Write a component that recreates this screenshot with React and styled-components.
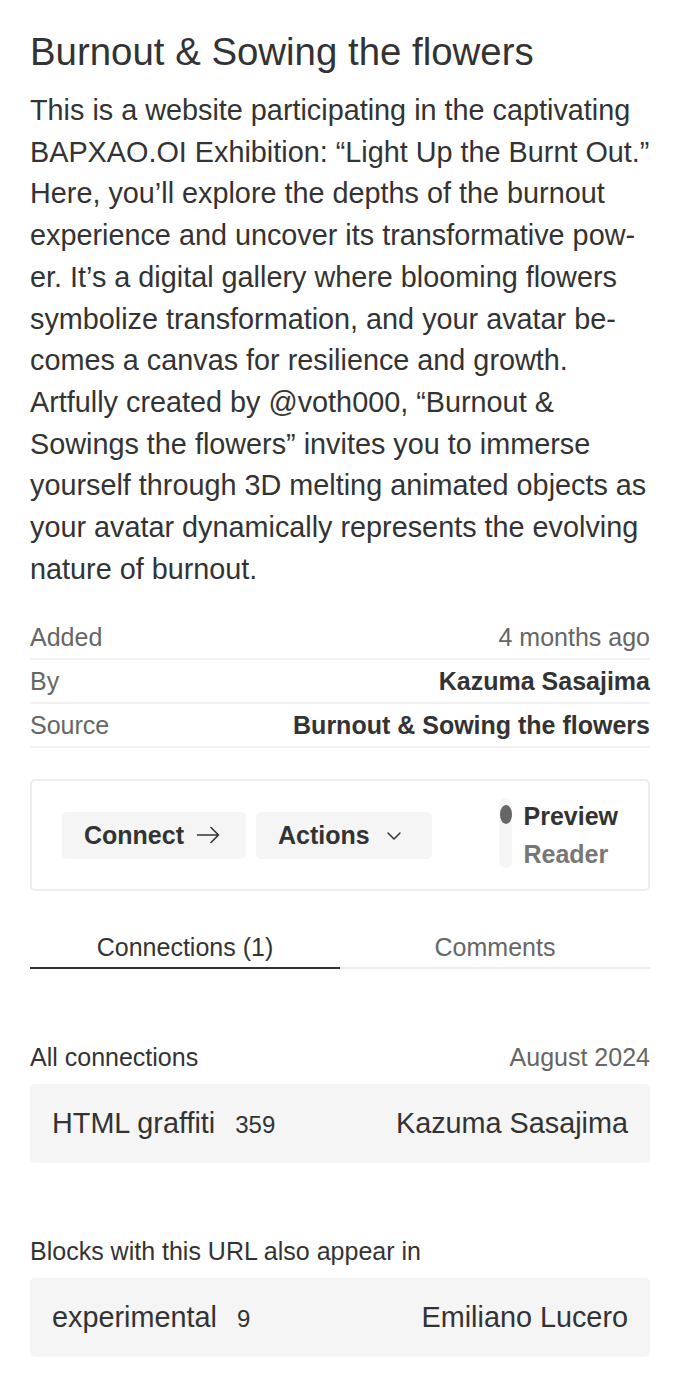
import styled, { createGlobalStyle } from "styled-components";

const GlobalStyle = createGlobalStyle`
    body {
        margin: 0;
        background: #ffffff;
        font-family: "Liberation Sans", Arial, sans-serif;
        color: #333333;
    }
`;

const meta = [
    { label: "Added", value: "4 months ago", strong: false },
    { label: "By", value: "Kazuma Sasajima", strong: true },
    { label: "Source", value: "Burnout & Sowing the flowers", strong: true },
];

export default function App() {
    return (
        <Page>
            <GlobalStyle />
            <Title>Burnout &amp; Sowing the flowers</Title>
            <Description>
                This is a website participating in the captivating BAPXAO.OI Exhibition: “Light Up the Burnt Out.”
                Here, you’ll explore the depths of the burnout experience and uncover its transformative pow{"\u00AD"}er.
                It’s a digital gallery where blooming flowers symbolize transformation, and your avatar be{"\u00AD"}comes
                a canvas for resilience and growth. Artfully created by @voth000, “Burnout &amp; Sowings the flowers”
                invites you to immerse yourself through 3D melting animated objects as your avatar dynamically
                represents the evolving nature of burnout.
            </Description>

            <MetaList>
                {meta.map(m => (
                    <MetaRow key={m.label}>
                        <MetaLabel>{m.label}</MetaLabel>
                        <MetaValue $strong={m.strong}>{m.value}</MetaValue>
                    </MetaRow>
                ))}
            </MetaList>

            <ActionBox>
                <Buttons>
                    <ActionButton>
                        Connect
                        <svg width="24" height="24" viewBox="0 0 24 24" fill="none" stroke="#333" strokeWidth="1.6" strokeLinecap="round" strokeLinejoin="round">
                            <path d="M1.5 12h21M15 4.5l7.5 7.5-7.5 7.5" />
                        </svg>
                    </ActionButton>
                    <ActionButton>
                        Actions
                        <svg width="24" height="24" viewBox="0 0 24 24" fill="none" stroke="#333" strokeWidth="1.5" strokeLinecap="round" strokeLinejoin="round">
                            <path d="M6 10l6 6 6-6" />
                        </svg>
                    </ActionButton>
                </Buttons>
                <ModeToggle>
                    <Track>
                        <Knob />
                    </Track>
                    <Modes>
                        <Mode $active>Preview</Mode>
                        <Mode>Reader</Mode>
                    </Modes>
                </ModeToggle>
            </ActionBox>

            <Tabs>
                <Tab $active>Connections (1)</Tab>
                <Tab>Comments</Tab>
            </Tabs>

            <Section>
                <SectionHead>
                    <span>All connections</span>
                    <SectionDate>August 2024</SectionDate>
                </SectionHead>
                <ChannelCard>
                    <ChannelName>HTML graffiti <Count>359</Count></ChannelName>
                    <Owner>Kazuma Sasajima</Owner>
                </ChannelCard>
            </Section>

            <Section>
                <SectionHead>
                    <span>Blocks with this URL also appear in</span>
                </SectionHead>
                <ChannelCard>
                    <ChannelName>experimental <Count>9</Count></ChannelName>
                    <Owner>Emiliano Lucero</Owner>
                </ChannelCard>
            </Section>
        </Page>
    );
}

const Page = styled.div`
    width: 690px;
    box-sizing: border-box;
    padding: 30px 40px 29px 30px;
`;

const Title = styled.h1`
    margin: 0;
    font-size: 38.4px;
    font-weight: 400;
    line-height: 44px;
    color: #333333;
`;

const Description = styled.p`
    margin: 16px 0 0;
    font-size: 28.8px;
    line-height: 41.7px;
    color: #333333;
    hyphens: manual;
`;

const MetaList = styled.div`
    margin-top: 26px;
    display: flex;
    flex-direction: column;
`;

const MetaRow = styled.div`
    display: flex;
    justify-content: space-between;
    align-items: center;
    height: 42px;
    border-bottom: 2px solid #f2f2f2;
    font-size: 25px;
`;

const MetaLabel = styled.span`
    color: #666666;
`;

const MetaValue = styled.span`
    color: ${p => (p.$strong ? "#333333" : "#666666")};
    font-weight: ${p => (p.$strong ? 700 : 400)};
`;

const ActionBox = styled.div`
    margin-top: 31px;
    height: 112px;
    box-sizing: border-box;
    border: 2px solid #eeeeee;
    border-radius: 5px;
    padding: 0 30px 0 30px;
    display: flex;
    justify-content: space-between;
    align-items: center;
`;

const Buttons = styled.div`
    display: flex;
    gap: 10px;
`;

const ActionButton = styled.button`
    height: 47px;
    box-sizing: border-box;
    padding: 0 26px 0 22px;
    display: flex;
    align-items: center;
    gap: 12px;
    border: none;
    border-radius: 5px;
    background: #f5f5f5;
    font-family: inherit;
    font-size: 25px;
    font-weight: 700;
    color: #333333;
`;

const ModeToggle = styled.div`
    display: flex;
    gap: 11px;
    align-items: stretch;
`;

const Track = styled.div`
    width: 13px;
    height: 70px;
    border-radius: 7px;
    background: #f5f5f5;
    padding-top: 7px;
    box-sizing: border-box;
`;

const Knob = styled.div`
    width: 12px;
    height: 19px;
    margin-left: 0.5px;
    border-radius: 50%;
    background: #666666;
`;

const Modes = styled.div`
    display: flex;
    flex-direction: column;
    justify-content: space-between;
    margin-top: -1px;
`;

const Mode = styled.span`
    font-size: 25px;
    font-weight: 700;
    line-height: 38px;
    color: ${p => (p.$active ? "#333333" : "#777777")};
`;

const Tabs = styled.div`
    margin-top: 36px;
    display: grid;
    grid-template-columns: 1fr 1fr;
`;

const Tab = styled.div`
    text-align: center;
    font-size: 25px;
    line-height: 40px;
    color: ${p => (p.$active ? "#333333" : "#666666")};
    border-bottom: ${p => (p.$active ? "2px solid #333333" : "2px solid #eeeeee")};
`;

const Section = styled.div`
    margin-top: 75px;
`;

const SectionHead = styled.div`
    display: flex;
    justify-content: space-between;
    font-size: 25px;
    line-height: 26px;
    color: #333333;
`;

const SectionDate = styled.span`
    color: #666666;
`;

const ChannelCard = styled.div`
    margin-top: 14px;
    height: 79px;
    box-sizing: border-box;
    padding: 0 22px;
    border-radius: 5px;
    background: #f5f5f5;
    display: flex;
    justify-content: space-between;
    align-items: center;
    font-size: 28.8px;
    color: #333333;
`;

const ChannelName = styled.span`
    display: flex;
    align-items: baseline;
    gap: 20px;
`;

const Count = styled.span`
    font-size: 24px;
`;

const Owner = styled.span``;
